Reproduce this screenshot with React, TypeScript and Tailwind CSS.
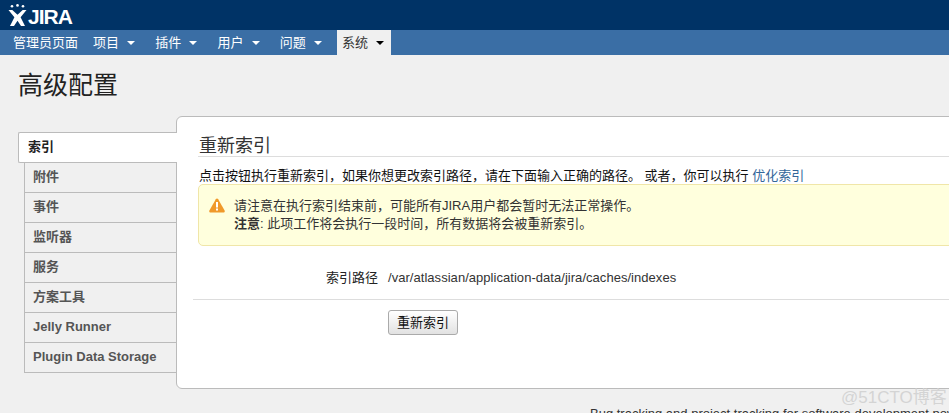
import React from 'react';

const navItems = ['项目', '插件', '用户', '问题'];
const sideItems = ['附件', '事件', '监听器', '服务', '方案工具', 'Jelly Runner', 'Plugin Data Storage'];

const Caret: React.FC<{ className: string }> = ({ className }) => (
  <span className={`ml-2 h-0 w-0 border-x-4 border-t-4 border-x-transparent ${className}`} />
);

const JiraLogo: React.FC = () => (
  <svg width="19" height="22" viewBox="0 0 19 22" className="shrink-0">
    <g fill="#fff">
      <circle cx="4" cy="2.200" r="1.300" />
      <circle cx="9.500" cy="1.400" r="1.300" />
      <circle cx="15" cy="2.200" r="1.300" />
      <path d="M.5 6h3.800l5.200 4.800L14.700 6h3.800l-5.900 7.200L17 22h-4l-3.500-5.200L6 22H2l4.400-8.800z" />
    </g>
  </svg>
);

const App: React.FC = () => {
  return (
    <div className="relative h-[413px] w-[949px] overflow-hidden bg-[#f0f0f0] font-['Liberation_Sans','Noto_Sans_CJK_SC',sans-serif] text-[13px] text-[#333]">
      <header className="flex h-[30px] items-start gap-px bg-[#003366] pl-[8px] pt-[4px]">
        <JiraLogo />
        <span className="mt-[1px] text-[21px] font-bold leading-[24px] tracking-[-1px] text-white">JIRA</span>
      </header>

      <nav className="flex h-[25px] items-center bg-[#3a6ea5] pl-[8px] text-white">
        <a className="mr-[5px] flex h-full items-center px-[5px]">管理员页面</a>
        {navItems.map((item) => (
          <a key={item} className="mr-[8.250px] flex h-full w-[54px] items-center pl-[5px]">
            {item}
            <Caret className="border-t-white" />
          </a>
        ))}
        <a className="flex h-full w-[54px] items-center bg-[#f0f0f0] pl-[5px] text-[#333]">
          系统
          <Caret className="border-t-black" />
        </a>
      </nav>

      <h1 className="ml-[18px] mt-[14px] h-[47px] text-[25px] font-normal leading-[32px] text-[#222]">高级配置</h1>

      <div className="ml-[18px] flex items-start">
        <ul className="mt-[16px] w-[158px] shrink-0">
          <li className="relative z-10 flex h-[31px] w-[159px] items-center rounded-l-[2px] border border-r-0 border-[#bbb] bg-white pb-px pl-[9px] font-bold text-[#222]">
            索引
          </li>
          {sideItems.map((item) => (
            <li
              key={item}
              className="ml-[6px] flex h-[30px] items-center border-b border-l border-[#bbb] pb-px pl-[8px] font-bold text-[#555]"
            >
              {item}
            </li>
          ))}
        </ul>

        <main className="h-[273px] w-[800px] shrink-0 rounded-l-[6px] border border-[#bbb] bg-white pl-[16px] pt-[15px]">
          <h2 className="ml-[5px] h-[25px] border-b border-[#ddd] pl-px text-[18px] font-normal leading-[28px] text-[#333]">重新索引</h2>
          <p className="ml-[5px] mt-[9px] h-[18px] pl-px leading-[19px] text-[#111]">
            点击按钮执行重新索引，如果你想更改索引路径，请在下面输入正确的路径。 或者，你可以执行 <a className="text-[#336699]">优化索引</a>
          </p>
          <div className="ml-[5px] flex h-[62px] rounded-l-[5px] border border-[#f0e6a8] bg-[#ffffdd] pl-[10px] pt-[12px]">
            <svg width="16" height="15" viewBox="0 0 16 15" className="mt-px shrink-0">
              <path d="M8 .5c.5 0 .9.3 1.200.8l6.400 11.200c.5.9-.1 2-1.200 2H1.600c-1.100 0-1.700-1.100-1.200-2L6.800 1.300C7.100.8 7.500.5 8 .5z" fill="#f0992a" />
              <rect x="7" y="4" width="2" height="5.500" fill="#fff" />
              <rect x="7" y="10.500" width="2" height="2" fill="#fff" />
            </svg>
            <div className="ml-[9px] leading-[18px] text-[#333]">
              <p>请注意在执行索引结束前，可能所有JIRA用户都会暂时无法正常操作。</p>
              <p><strong className="font-bold">注意</strong>: 此项工作将会执行一段时间，所有数据将会被重新索引。</p>
            </div>
          </div>

          <div className="ml-[5px] mt-[22px] flex h-[20px] items-center">
            <span className="w-[180px] text-right text-[#222]">索引路径</span>
            <span className="ml-[10px] tracking-[0.04px] text-[#333]">/var/atlassian/application-data/jira/caches/indexes</span>
          </div>

          <div className="mt-[11px] border-t border-[#ddd] pl-[195px] pt-[10px]">
            <button className="h-[25px] w-[70px] rounded-[3px] border border-[#aaa] bg-gradient-to-b from-white to-[#e2e2e2] text-[13px] text-[#111]">
              重新索引
            </button>
          </div>
        </main>
      </div>

      <footer className="ml-[590px] mt-[15px] whitespace-nowrap text-[#333]">
        Bug tracking and project tracking for software development powered by Atlassian JIRA
      </footer>

      <span className="absolute left-[841px] top-[385px] text-[17px] text-[#d4d4d4]">@51CTO博客</span>
    </div>
  );
};

export default App;
